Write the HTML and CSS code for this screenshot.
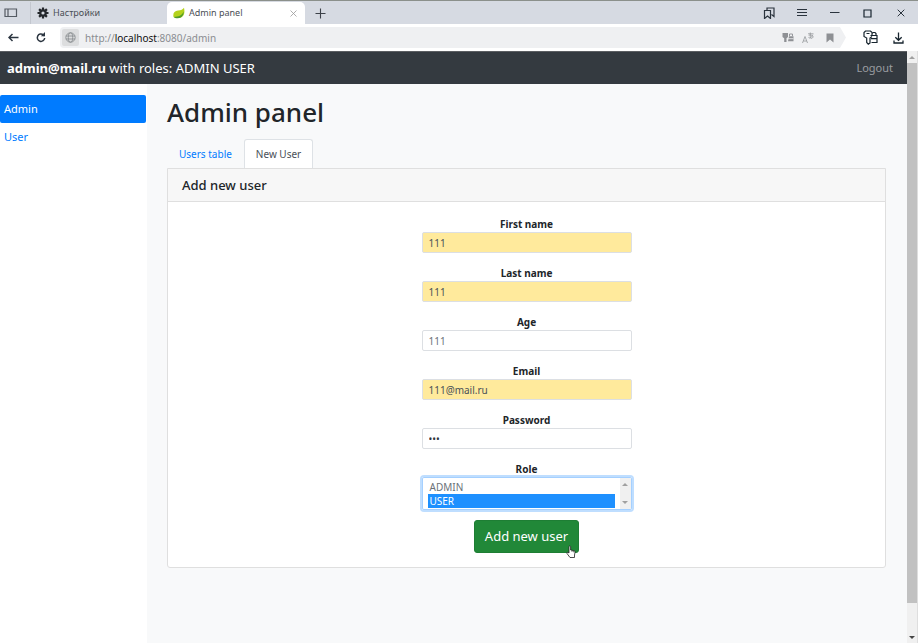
FILE: index.html
```html
<!DOCTYPE html>
<html lang="en">
<head>
<meta charset="utf-8">
<title>Admin panel</title>
<link rel="stylesheet" href="styles.css">
</head>
<body>
<header class="browser">
  <div class="tabbar">
    <button class="icon-btn panel-btn" aria-label="Side panel"><svg width="14" height="10" viewBox="0 0 14 10"><path d="M1 1h11.500v7.500H1zM4 1v7.500" fill="none" stroke="#555b63" stroke-width="1.200"/></svg></button>
    <div class="btab">
      <svg width="12" height="12" viewBox="0 0 12 12"><g stroke="#25282d" stroke-width="2.200"><path d="M6 .5v11M.5 6h11M2.100 2.100l7.800 7.800M9.900 2.100L2.100 9.900"/></g><circle cx="6" cy="6" r="3.800" fill="#25282d"/><circle cx="6" cy="6" r="1.600" fill="#d6dae2"/></svg>
      <span>Настройки</span>
    </div>
    <div class="btab current">
      <svg width="12" height="12" viewBox="0 0 12 12"><path d="M11 .8C12 5 11.500 10.500 6 11c-2 .2-4.500.2-5.500-1C-.3 6 1.500 4 5 3.600 8 3.300 10 2.500 11 .8z" fill="#b4d21c"/><path d="M1 10c4.500-.3 8-1.500 9.800-5.500C10.500 9 8 11 5 11.300c-2 .1-3.500-.3-4-1.300z" fill="#4f9a2a"/></svg>
      <span>Admin panel</span>
      <button class="icon-btn close-tab" aria-label="Close tab"><svg width="7" height="7" viewBox="0 0 7 7"><path d="M.5.5l6 6M6.500.5l-6 6" stroke="#999" stroke-width=".8"/></svg></button>
    </div>
    <button class="icon-btn new-tab" aria-label="New tab"><svg width="11" height="11" viewBox="0 0 11 11"><path d="M5.500.5v10M.5 5.500h10" stroke="#3c4148" stroke-width="1.100"/></svg></button>
    <div class="window-actions">
      <button class="icon-btn" aria-label="Collections"><svg width="12" height="12" viewBox="0 0 12 12"><path d="M4 3V1h7v8.500L8.500 7.500M1.500 3.500h6v8L4.500 9l-3 2.500z" fill="none" stroke="#2a333d" stroke-width="1.200"/></svg></button>
      <button class="icon-btn" aria-label="Menu"><svg width="10" height="8" viewBox="0 0 10 8"><path d="M0 .5h10M0 3.500h10M0 6.500h10" stroke="#2a333d"/></svg></button>
      <button class="icon-btn" aria-label="Minimize"><svg width="10" height="8" viewBox="0 0 10 8"><path d="M0 3.500h9.500" stroke="#2a333d"/></svg></button>
      <button class="icon-btn" aria-label="Maximize"><svg width="9" height="9" viewBox="0 0 9 9"><path d="M1 1h7v7H1z" fill="none" stroke="#17242e" stroke-width="1.200"/></svg></button>
      <button class="icon-btn" aria-label="Close"><svg width="8" height="8" viewBox="0 0 8 8"><path d="M.7.7l6.600 6.600M7.300.7L.7 7.300" stroke="#2a333d"/></svg></button>
    </div>
  </div>
  <div class="toolbar">
    <button class="icon-btn nav-btn" aria-label="Back"><svg width="11" height="9" viewBox="0 0 11 9"><path d="M10.500 4.500H1M4.500 1L1 4.500 4.500 8" fill="none" stroke="#2b3540" stroke-width="1.500"/></svg></button>
    <button class="icon-btn nav-btn" aria-label="Reload"><svg width="10" height="11" viewBox="0 0 10 11"><path d="M8.700 6a3.700 3.700 0 1 1-1.500-3.300L8.500 4" fill="none" stroke="#2b3540" stroke-width="1.500"/><path d="M9 0v4.300H4.800z" fill="#2b3540"/></svg></button>
    <div class="address">
      <button class="icon-btn site-btn" aria-label="Site information"><svg width="11" height="11" viewBox="0 0 11 11"><g fill="none" stroke="#8b8e92" stroke-width=".9"><circle cx="5.500" cy="5.500" r="4.700"/><ellipse cx="5.500" cy="5.500" rx="2.200" ry="4.700"/><path d="M1 4h9M1 7h9"/></g></svg></button>
      <span class="url">http://<b>localhost</b>:8080/admin</span>
      <div class="address-actions">
        <svg width="12" height="11" viewBox="0 0 12 11"><path d="M.5 1H6v4L4.500 6.200V10H2.200V6.200L.5 5z" fill="#8e9094"/><path d="M7 4.200h4.500v5H6z" fill="#8e9094"/><path d="M7.500 4V2h3v2" fill="none" stroke="#8e9094" stroke-width=".9"/><path d="M5.500 6.700h6" stroke="#eff0f2" stroke-width=".8"/></svg>
        <svg width="12" height="12" viewBox="0 0 12 12"><path d="M.5 11L3 4.500 5.500 11M1.400 9h3.200M6 1.800h5.500M8.300.5v5.800M6.500 5.500c1.500 1.500 4-1 4.200-2.700M6.700 3.500c1-1 4-.5 4.300 1 .2 1.300-1 1.800-2 2" fill="none" stroke="#94979b" stroke-width=".8"/></svg>
        <svg class="bookmark" width="8" height="10" viewBox="0 0 8 10"><path d="M.5.500h7v9L4 6.500l-3.500 3z" fill="#8e9094"/></svg>
      </div>
    </div>
    <button class="icon-btn keys-btn" aria-label="Passwords"><svg width="15" height="15" viewBox="0 0 15 15"><path d="M9 6.500L7 8v5L5.300 14.200 3.700 12.500V8L1 6.500v-4L2.500 1h5L9 2.500M3.500 3.500h3M9 5V3.500l1-1h2l1 1V5M7.500 5.500H14v7H8.500M8 8.700h6" fill="none" stroke="#17242e" stroke-width="1.200"/></svg></button>
    <button class="icon-btn" aria-label="Downloads"><svg width="11" height="12" viewBox="0 0 11 12"><path d="M5.500.5v7.500M2.300 5.200L5.500 8.300l3.200-3.100M1 8.500V11h9V8.500" fill="none" stroke="#17242e" stroke-width="1.300"/></svg></button>
  </div>
</header>
<div class="viewport">
  <div class="page">
    <nav class="navbar">
      <span><strong>admin@mail.ru</strong> with roles: ADMIN USER</span>
      <a class="logout" href="#logout">Logout</a>
    </nav>
    <div class="layout">
      <aside class="sidebar">
        <a class="side-link active" href="#admin">Admin</a>
        <a class="side-link" href="#user">User</a>
      </aside>
      <main class="content">
        <h1>Admin panel</h1>
        <nav class="tabs">
          <a class="tab" href="#users">Users table</a>
          <a class="tab selected" href="#new">New User</a>
        </nav>
        <section class="card">
          <h2>Add new user</h2>
          <form class="form">
            <label for="first">First name</label>
            <input class="filled" id="first" type="text" value="111">
            <label for="last">Last name</label>
            <input class="filled" id="last" type="text" value="111">
            <label for="age">Age</label>
            <input id="age" type="text" inputmode="numeric" value="111">
            <label for="email">Email</label>
            <input class="filled" id="email" type="email" value="111@mail.ru">
            <label for="password">Password</label>
            <input id="password" type="password" value="111">
            <label for="role">Role</label>
            <div class="listbox">
              <select id="role" multiple size="2">
                <option>ADMIN</option>
                <option class="chosen" selected>USER</option>
              </select>
              <div class="list-scroll"><i class="arrow up"></i><i class="arrow down"></i></div>
            </div>
            <button class="submit" type="button">Add new user
              <svg class="pointer" width="10" height="13" viewBox="0 0 10 13"><path d="M3 8V1.500Q3.800.3 4.600 1.500V5l3.500.7q1 .3 1 1.300L8.500 10v2.500H4L1 8.500Q.8 7 2 7.300z" fill="#fff" stroke="#222" stroke-width=".8"/><path d="M6 5.500v1.500M7.600 6v1.300" stroke="#222" stroke-width=".6"/></svg>
            </button>
          </form>
        </section>
      </main>
    </div>
  </div>
  <div class="page-scroll"><i class="arrow up"></i><div class="thumb"></div><i class="arrow down dark"></i></div>
</div>
</body>
</html>
```
FILE: styles.css
```css
* { box-sizing: border-box; }
body {
  margin: 0;
  min-height: 100vh;
  display: flex;
  flex-direction: column;
  font: 11px/16px "Noto Sans", "Open Sans", sans-serif;
  color: #212529;
  background: #fff;
}
a { text-decoration: none; color: #007bff; }
svg { display: block; flex: none; }
button, input, select { font: inherit; }
.icon-btn {
  display: flex;
  align-items: center;
  justify-content: center;
  padding: 0;
  border: 0;
  background: none;
}

/* Browser window */
.tabbar {
  display: flex;
  height: 24px;
  padding: 1px 1px 0 0;
  border-top: 1px solid #8b908b;
  background: #d6dae2;
}
.panel-btn { width: 30px; padding-right: 8px; }
.btab {
  display: flex;
  align-items: center;
  gap: 4px;
  width: 137px;
  padding: 0 6px;
  font-size: 9px;
  color: #4a4e55;
}
.btab:not(.current) { border-left: 1px solid #c3c7cf; }
.btab.current { width: 138px; border-radius: 5px 5px 0 0; background: #fff; }
.close-tab { margin-left: auto; width: 11px; }
.new-tab { width: 30px; }
.window-actions { display: flex; margin-left: auto; }
.window-actions .icon-btn { width: 33px; }
.toolbar {
  display: flex;
  align-items: center;
  height: 27px;
  padding-right: 11px;
  background: #fff;
}
.nav-btn { width: 27px; height: 20px; }
.address {
  flex: 1;
  display: flex;
  align-items: center;
  height: 21px;
  margin: 0 17px 0 6px;
  border-radius: 4px 0 0 4px;
  background: #eff0f2;
  clip-path: polygon(0 0, calc(100% - 6px) 0, 100% 50%, calc(100% - 6px) 100%, 0 100%);
}
.site-btn { width: 17px; height: 17px; margin: 0 6px 0 2px; border-radius: 2px; background: #dcddde; }
.url { color: #8a8d91; font-size: 10px; }
.url b { font-weight: 400; color: #111; }
.address-actions { display: flex; align-items: center; gap: 8px; margin-left: auto; padding-right: 12px; }
.bookmark { margin-left: 4px; }
.keys-btn { margin-right: 12px; }
.toolbar > .icon-btn:last-child { width: 17px; }

/* Page */
.viewport { flex: 1; display: flex; }
.page { flex: 1; display: flex; flex-direction: column; }
.navbar {
  display: flex;
  align-items: center;
  justify-content: space-between;
  height: 33px;
  padding: 0 14px 0 7px;
  border-top: 1px solid #5b5e62;
  background: #343a40;
  color: #fff;
  font-size: 13px;
}
.logout { font-size: 11px; color: #9a9da0; }
.layout { flex: 1; display: grid; grid-template-columns: 147px 1fr; }
.sidebar { padding: 11px 1px 0 0; }
.side-link { display: block; padding: 6px 4px; border-radius: 2px; }
.side-link.active { background: #007bff; color: #fff; }
.content { padding: 11px 21px 0 20px; background: #f8f9fa; }
h1 { margin: 0 0 9px; font-size: 26px; line-height: 35px; font-weight: 500; }
.tabs { display: flex; }
.tab { height: 29px; padding: 6px 11px; border: 1px solid transparent; border-bottom: 0; font-size: 10px; }
.tab.selected { background: #fff; color: #495057; border-color: #dee2e6; border-radius: 3px 3px 0 0; }
.card { border: 1px solid #dfdfdf; border-radius: 0 0 3px 3px; background: #fff; }
h2 {
  margin: 0;
  padding: 6px 14px;
  border-bottom: 1px solid #dfdfdf;
  background: #f7f7f7;
  font-size: 13px;
  line-height: 20px;
  font-weight: 500;
}
.form {
  display: flex;
  flex-direction: column;
  width: 210px;
  margin: 0 auto;
  padding: 14px 0;
}
.form label { text-align: center; font-size: 10px; font-weight: 700; }
.form input {
  height: 21px;
  margin-bottom: 12px;
  padding: 0 6px;
  border: 1px solid #dcdfe3;
  border-radius: 2px;
  background: #fff;
  color: #6a7178;
  font-size: 10px;
}
.form .filled { background: #ffea9c; color: #495057; }
#password { color: #30363c; }
.listbox {
  display: flex;
  height: 33px;
  border: 1px solid #a5d0ff;
  border-radius: 2px;
  box-shadow: 0 0 0 2px #bfdeff;
}
.listbox select {
  flex: 1;
  height: 31px;
  padding: 2px 5px;
  border: 0;
  outline: 0;
  overflow: hidden;
  background: #fff;
  color: #6a7178;
  font-size: 10px;
  line-height: 14px;
}
.listbox option { height: 14px; min-height: 14px; padding: 0 2px; }
.listbox .chosen { background: #1e90ff linear-gradient(#1e90ff, #1e90ff); color: #fff; }
.list-scroll, .page-scroll {
  display: flex;
  flex-direction: column;
  align-items: center;
  justify-content: space-between;
  background: #f0f0f0;
}
.list-scroll { width: 11px; padding: 5px 0; }
.page-scroll { width: 11px; padding: 5px 0 4px; border-right: 1px solid #dedede; }
.thumb { flex: 1; width: 100%; margin: 4px 0 33px; background: #c1c1c1; }
.arrow { width: 0; height: 0; border: 3px solid transparent; }
.arrow.up { border-top: 0; border-bottom-color: #a0a0a0; }
.arrow.down { border-bottom: 0; border-top-color: #a0a0a0; }
.arrow.dark { border-top-color: #444; }
.submit {
  position: relative;
  align-self: center;
  margin-top: 10px;
  padding: 6px 10px;
  border: 1px solid #1e7e34;
  border-radius: 3px;
  background: #218838;
  color: #fff;
  font-size: 13px;
  line-height: 19px;
}
.pointer { position: absolute; right: 2px; bottom: -6px; }
```
